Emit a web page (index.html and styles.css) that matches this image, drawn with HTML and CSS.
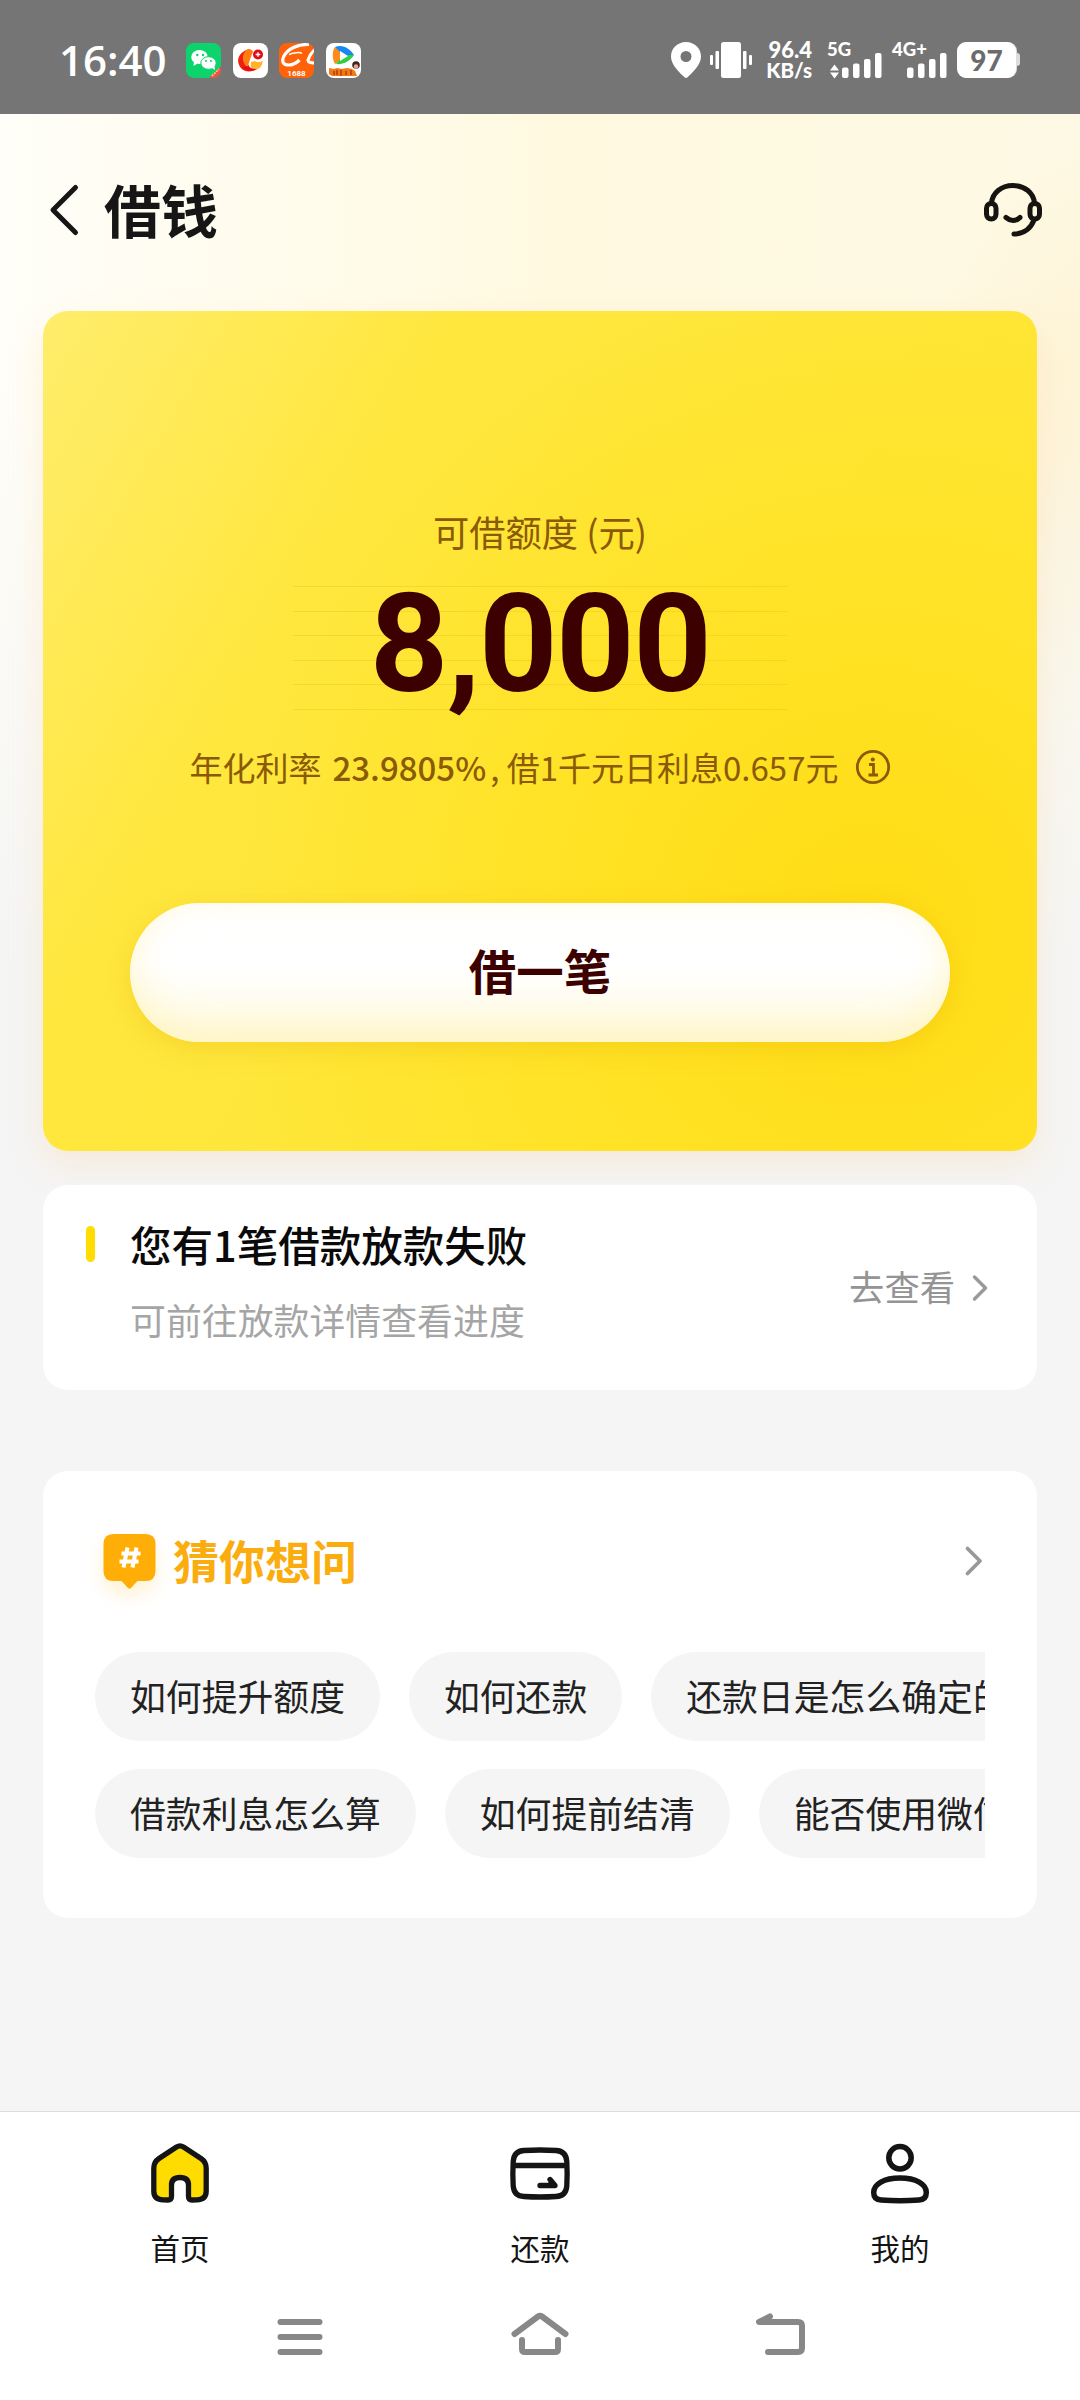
FILE: index.html
```html
<!DOCTYPE html>
<html lang="zh-CN">
<head>
<meta charset="utf-8">
<title>借钱</title>
<link rel="stylesheet" href="styles.css">
</head>
<body>
<div class="screen">
  <header class="status">
    <span class="clock">16:40</span>
    <div class="apps">
      <svg class="app" viewBox="0 0 35 35"><defs><clipPath id="r"><rect width="35" height="35" rx="8"/></clipPath></defs><g clip-path="url(#r)"><rect width="35" height="35" fill="#0cd36b"/><path d="M35 23v12H23z" fill="#f0503a"/><path d="M26 33l7-7" stroke="#ffb3a0" stroke-width="2" stroke-dasharray="2 1"/></g><ellipse cx="13.500" cy="14" rx="8.300" ry="7" fill="#fff"/><path d="M8 18l-.5 5 4-2.500z" fill="#fff"/><ellipse cx="22.500" cy="20" rx="7.700" ry="6.300" fill="#fff" stroke="#0cd36b"/><path d="M26 25l3 2-.5-4z" fill="#fff"/><g fill="#0cd36b"><circle cx="11.300" cy="12" r="1.200"/><circle cx="17" cy="12" r="1.200"/><circle cx="20" cy="18" r="1"/><circle cx="25" cy="18" r="1"/></g></svg>
      <svg class="app" viewBox="0 0 35 35"><rect width="35" height="35" rx="8" fill="#fff"/><path d="M15 6.500C7 9 4 15 5.500 20.500c2 7 9 9.500 15 7C14 23 11 14 15 6.500z" fill="#f0200f"/><path d="M14 6.500C8 11 9 20 14 24c1 1 3-9 6-15-1-3-4-3.500-6-2.500z" fill="#ff7d14"/><path d="M18 19c-1 5 1 8 4 8 5-1 8-5 7.500-9.500-2 2-5 2-8 .5z" fill="#ffb42a"/><path d="M9 24c4 5 11 5 15 2-4 0-8-1-10-3z" fill="#e90d12"/><circle cx="25" cy="11.500" r="5" fill="#e00d18"/><path d="M25 9.200v4.600M22.700 11.500h4.600" stroke="#fff" stroke-width="1.300"/></svg>
      <svg class="app" viewBox="0 0 35 35"><g clip-path="url(#r)"><rect width="35" height="35" fill="#ff6209"/><path d="M30 1.500C19 1 8 6 4.500 14c-2 5 0 8 5 8 4 0 8-2 11-5" fill="none" stroke="#fff" stroke-width="3.200"/><path d="M10 11.500c5-2 11-2.500 13-1" fill="none" stroke="#fff" stroke-width="1.500"/><path d="M36 6c-4 4-6 8-7 11q-.5 3 7 3" fill="none" stroke="#fff" stroke-width="3"/></g><text class="tag" x="17.500" y="32.500" text-anchor="middle">1688</text></svg>
      <svg class="app" viewBox="0 0 35 35"><rect width="35" height="35" rx="8" fill="#fff"/><path d="M9 4c-3 4-3 12 0 17l5-3V7z" fill="#ff8a1c"/><path d="M9 4c8-3 15 2 19 8l-6 2-9-6z" fill="#1687f5"/><path d="M28 12c-3 5-10 10-18 9l4-5 9-4z" fill="#2fd03f"/><path d="M14 8l8 5-8 5z" fill="#fff"/><circle cx="30" cy="22" r="3.800" fill="#40241f"/><circle cx="30" cy="23.500" r="2.300" fill="#e8a58a"/><path d="M3 25l5 1 3-1 5 1 5-1 5 1 3 2 2 5H6L3 31z" fill="#f27a13"/><path d="M8 28v4M11 27v5M15 27v6M20 28v4M25 27v5" stroke="#b1301c" stroke-width="1.300"/></svg>
    </div>
    <div class="signals">
      <svg class="pin" viewBox="0 0 30 36"><path fill-rule="evenodd" d="M15 0C6.500 0 0 6.400 0 14.500 0 23 9 31 13.500 35.300q1.500 1.400 3 0C21 31 30 23 30 14.500 30 6.400 23.500 0 15 0zm0 9a5.500 5.500 0 1 1 0 11 5.500 5.500 0 0 1 0-11z" fill="#fff"/></svg>
      <svg class="vibe" viewBox="0 0 42 36"><g fill="#fff"><rect x="11" width="20" height="36" rx="2.500"/><rect y="13" width="3" height="10" rx="1"/><rect x="5.500" y="9" width="3.500" height="18" rx="1"/><rect x="33" y="9" width="3.500" height="18" rx="1"/><rect x="39" y="13" width="3" height="10" rx="1"/></g></svg>
      <div class="speed"><span>96.4</span><span class="unit">KB/s</span></div>
      <svg class="cell five" viewBox="0 0 56 38"><text class="gen" x="0" y="14.500">5G</text><path d="M3 29.500l4.500-6 4.500 6zM3 31.500h9l-4.500 6z" fill="#fff"/><g fill="#fff"><rect x="15" y="26.500" width="6.500" height="10.500" rx="2"/><rect x="26" y="22.500" width="6.500" height="14.500" rx="2"/><rect x="37" y="18" width="6.500" height="19" rx="2"/><rect x="48" y="12" width="6.500" height="25" rx="2"/></g></svg>
      <svg class="cell four" viewBox="0 0 56 38"><text class="gen" x="0" y="14.500">4G+</text><g fill="#fff"><rect x="15" y="26.500" width="6.500" height="10.500" rx="2"/><rect x="26" y="22.500" width="6.500" height="14.500" rx="2"/><rect x="37" y="18" width="6.500" height="19" rx="2"/><rect x="48" y="12" width="6.500" height="25" rx="2"/></g></svg>
      <div class="battery">97</div>
    </div>
  </header>

  <main class="content">
    <div class="titlebar">
      <svg class="back" viewBox="0 0 28 50"><path d="M25.500 2.500L3 25l22.500 22.500" fill="none" stroke="#161616" stroke-width="5" stroke-linecap="round" stroke-linejoin="round"/></svg>
      <h1 class="title">借钱</h1>
      <svg class="service" viewBox="0 0 58 54"><g fill="none" stroke="#161410" stroke-width="5" stroke-linecap="round"><path d="M7.500 20C8.500 10 17 2.500 29 2.500S49.500 10 50.500 20"/><rect x="2.500" y="20.500" width="9.500" height="15.500" rx="4.700"/><rect x="46" y="20.500" width="9.500" height="15.500" rx="4.700"/><path d="M22 34.500q7 6 14 0M50 37C47 45 40 51 30 51"/></g></svg>
    </div>

    <section class="loan">
      <p class="loan-label">可借额度 (元)</p>
      <div class="amount">8,000</div>
      <div class="rate"><span>年化利率</span><b class="percent">23.9805%</b><span class="interest">, 借1千元日利息0.657元</span>
        <svg class="info" viewBox="0 0 36 36"><g fill="none" stroke="#8a5a06" stroke-width="2.800"><circle cx="18" cy="18" r="15.700"/><path d="M14 15.500h4.500V26M13.500 26h9.500"/></g><circle cx="17.800" cy="10.500" r="2.100" fill="#8a5a06"/></svg>
      </div>
      <div class="borrow">借一笔</div>
    </section>

    <section class="notice">
      <i class="mark"></i>
      <div class="notice-text">
        <h2 class="notice-title">您有1笔借款放款失败</h2>
        <p class="notice-sub">可前往放款详情查看进度</p>
      </div>
      <span class="view">去查看</span>
      <svg class="chev small" viewBox="0 0 18 30"><path d="M2.500 4L13.500 15 2.500 26" fill="none" stroke="#999" stroke-width="3.500" stroke-linecap="round" stroke-linejoin="round"/></svg>
    </section>

    <section class="faq">
      <div class="faq-head">
        <svg class="hash" viewBox="0 0 52 55"><path d="M10 0h32q10 0 10 10v27q0 10-10 10h-8l-6.500 7q-1.500 1.500-3 0L18 47h-8Q0 47 0 37V10Q0 0 10 0z" fill="#ffae08"/><path d="M24 13.500l-4 20M33 13.500l-4 20M18 19.500h19M16 27.500h19" fill="none" stroke="#fff" stroke-width="4"/></svg>
        <h2 class="faq-title">猜你想问</h2>
        <svg class="chev" viewBox="0 0 18 30"><path d="M2.500 2.500L15 15 2.500 27.500" fill="none" stroke="#999" stroke-width="3.800" stroke-linecap="round" stroke-linejoin="round"/></svg>
      </div>
      <div class="chips">
        <div class="row"><span class="chip">如何提升额度</span><span class="chip">如何还款</span><span class="chip">还款日是怎么确定的</span></div>
        <div class="row"><span class="chip">借款利息怎么算</span><span class="chip">如何提前结清</span><span class="chip">能否使用微信还款</span></div>
      </div>
    </section>
  </main>

  <footer class="bottom">
    <nav class="tabs">
      <div class="tab">
        <svg class="tab-icon" viewBox="0 0 60 60"><path d="M26.500 4Q30 1.800 33.500 4L51 15.500Q56.200 19 56.200 25V48Q56.200 56.500 47 56.800L42 57Q38.500 57 38.500 53.500V42Q38.500 34.500 30 34.500T21.500 42V53.500Q21.500 57 18 57L13 56.800Q3.800 56.500 3.800 48V25Q3.800 19 9 15.500z" fill="#ffdc00" stroke="#141414" stroke-width="5.300"/></svg>
        <span>首页</span>
      </div>
      <div class="tab">
        <svg class="tab-icon" viewBox="0 0 60 60"><g fill="none" stroke="#141414" stroke-width="5.300" stroke-linecap="round" stroke-linejoin="round"><path d="M14 7.500Q30 6.500 46 7.500 56 8 56.800 18.500 57.500 31 56.800 43 56 53 46 53.500 30 54.500 14 53.500 4 53 3.200 43 2.500 31 3.200 18.500 4 8 14 7.500zM4 22.500h52"/><path d="M30 42.500h15l-5-6M41 40l3 2"/></g></svg>
        <span>还款</span>
      </div>
      <div class="tab">
        <svg class="tab-icon" viewBox="0 0 60 60"><g fill="none" stroke="#141414" stroke-width="5.500"><circle cx="30" cy="14.800" r="11.200"/><path d="M3.700 49.500C3.700 41 14 35 30 35s26.300 6 26.300 14.500Q56.300 56.500 49 57 30 58.500 11 57 3.700 56.500 3.700 49.500z"/></g></svg>
        <span>我的</span>
      </div>
    </nav>
    <div class="sysnav">
      <svg class="sys" viewBox="0 0 60 44"><path d="M10.500 10h39M10.500 25h39M10.500 40h39" class="sys-line"/></svg>
      <svg class="sys" viewBox="0 0 60 44"><path d="M4.500 22L28 4.500q2-1.500 4 0L55.500 22M12 28v9q0 3 3 3h30q3 0 3-3v-9" class="sys-line"/></svg>
      <svg class="sys" viewBox="0 0 60 44"><path d="M20 4.500L9 10h39q4 0 4 4v22q0 4-4 4H18" class="sys-line"/></svg>
    </div>
  </footer>
</div>
</body>
</html>
```
FILE: styles.css
```css
* { box-sizing: border-box; margin: 0; padding: 0; }
body { width: 1080px; height: 2400px; overflow: hidden; font-family: "Noto Sans CJK SC", sans-serif; color: #222; }
svg { display: block; flex: none; overflow: visible; }
.screen { width: 1080px; height: 2400px; display: flex; flex-direction: column; background: #f5f5f5; }

.status { height: 114px; flex: none; background: #757575; display: flex; align-items: center; padding: 6px 59px 0 59px; color: #fff; }
.clock { font: 600 42px/42px "Open Sans", sans-serif; width: 127px; white-space: nowrap; }
.apps { display: flex; gap: 11.500px; }
.app { width: 35px; height: 35px; }
.tag { font: 700 8px "Roboto", sans-serif; fill: #fff; }
.signals { display: flex; align-items: center; margin-left: auto; }
.pin { width: 30px; height: 36px; }
.vibe { width: 42px; height: 36px; margin-left: 9px; }
.speed { display: flex; flex-direction: column; align-items: flex-end; width: 47px; margin-left: 13px; font: 900 22px/20px "Lato", sans-serif; }
.unit { font-size: 20.500px; }
.cell { width: 56px; height: 38px; }
.five { margin-left: 15px; }
.four { margin-left: 9px; }
.gen { font: 900 18.500px "Lato", sans-serif; fill: #fff; }
.battery { width: 59px; height: 36px; margin: 0 5px 0 9px; border-radius: 9px; background: #fff; box-shadow: 1px 0 0 #ddd; color: #6b6b6b; font: 900 28px/36px "Lato", sans-serif; text-align: center; position: relative; }
.battery::after { content: ""; position: absolute; right: -4px; top: 11px; width: 4px; height: 13px; border-radius: 0 3px 3px 0; background: #ddd; }

.content { flex: 1; padding: 0 43px; background:
  linear-gradient(180deg, rgba(245,245,245,0) 0, rgba(245,245,245,0) 250px, #f5f5f5 850px),
  radial-gradient(ellipse 200px 300px at 1120px 320px, rgba(255,236,196,.6), rgba(255,240,205,0)),
  linear-gradient(90deg, #fffef8 0, #fffcee 250px, #fff9e0 560px, #fef9e4 1080px); }
.titlebar { height: 197px; display: flex; align-items: center; padding: 0 0 6px 7px; margin-right: -5px; }
.back { width: 28px; height: 50px; }
.title { font-size: 57px; line-height: 60px; font-weight: 700; color: #161616; margin: 0 0 4px 26px; }
.service { width: 58px; height: 54px; margin-left: auto; }

.loan { height: 840px; border-radius: 25px; display: flex; flex-direction: column; align-items: center; color: #8a5a06;
  background: radial-gradient(circle 650px at 830px 620px, #ffdc14 0, #ffe224 45%, rgba(255,230,50,0) 100%), linear-gradient(120deg, #ffed6c 0, #ffe73e 28%, #ffe530 100%);
  box-shadow: 0 14px 36px rgba(255,190,110,.2); }
.loan-label { margin-top: 194px; font-size: 36.300px; line-height: 52px; white-space: nowrap; }
.amount { width: 494px; height: 125px; margin-top: 29px; font: 700 137px/116px Roboto, sans-serif; letter-spacing: -1.500px; color: #3c0000; text-align: center; background: repeating-linear-gradient(180deg, rgba(220,180,10,.28) 0 1px, transparent 1px 24.600px); }
.rate { display: flex; align-items: center; margin-top: 31px; height: 50px; font-size: 33px; line-height: 48px; white-space: nowrap; }
.percent { font-weight: 500; margin-left: 11px; font-size: 33px; }
.interest { margin-left: 4px; }
.info { width: 36px; height: 36px; margin-left: 16px; }
.borrow { width: 820px; height: 139px; margin-top: 111px; border-radius: 70px; font-size: 47.500px; line-height: 134px; font-weight: 700; text-align: center; color: #3c0000; background: linear-gradient(180deg, #fff 45%, #fffadf 100%); box-shadow: inset 0 -10px 36px rgba(255,240,170,.6), 0 6px 24px rgba(225,165,0,.28); }

.notice { height: 205px; margin-top: 34px; border-radius: 25px; background: #fff; display: flex; padding: 0 47px 0 43px; }
.mark { width: 9px; height: 36px; margin-top: 41px; border-radius: 5px; background: #ffdd00; }
.notice-text { margin: 30px 0 0 35px; }
.notice-title { font-size: 41.500px; line-height: 58px; font-weight: 500; color: #0a0a0a; }
.notice-sub { font-size: 35.900px; line-height: 50px; margin-top: 21px; color: #a5a5a5; }
.view { margin: 76px 17px 0 auto; font-size: 35.300px; line-height: 50px; color: #949494; }
.chev { width: 18px; height: 30px; }
.small { margin-top: 88px; }

.faq { height: 447px; margin-top: 81px; border-radius: 25px; background: #fff; padding: 62px 52px 0; }
.faq-head { display: flex; align-items: center; height: 56px; padding-left: 8px; }
.hash { width: 53px; height: 55px; filter: drop-shadow(0 10px 9px rgba(255,190,40,.2)); }
.faq-title { margin: -4px 0 0 17px; font-size: 46px; line-height: 56px; font-weight: 700; color: #fbad10; }
.faq-head .chev { margin: 0 2px 0 auto; }
.chips { display: flex; flex-direction: column; gap: 28px; margin-top: 63px; overflow: hidden; }
.row { display: flex; gap: 29px; }
.chip { flex: none; height: 89px; padding: 0 35px; border-radius: 45px; background: #f5f5f5; font-size: 35.850px; line-height: 86px; color: #222; white-space: nowrap; }

.bottom { height: 289px; flex: none; border-top: 1px solid #ddd; background: #fff; }
.tabs { display: grid; grid-template-columns: repeat(3, 1fr); height: 188px; }
.tab { display: flex; flex-direction: column; align-items: center; padding-top: 31px; font-size: 29.500px; line-height: 44px; color: #141414; }
.tab-icon { width: 60px; height: 60px; margin-bottom: 22px; }
.sysnav { display: flex; justify-content: space-between; width: 540px; margin: 12px auto 0; }
.sys { width: 60px; height: 44px; }
.sys-line { fill: none; stroke: #888; stroke-width: 6; stroke-linecap: round; stroke-linejoin: round; }
```
